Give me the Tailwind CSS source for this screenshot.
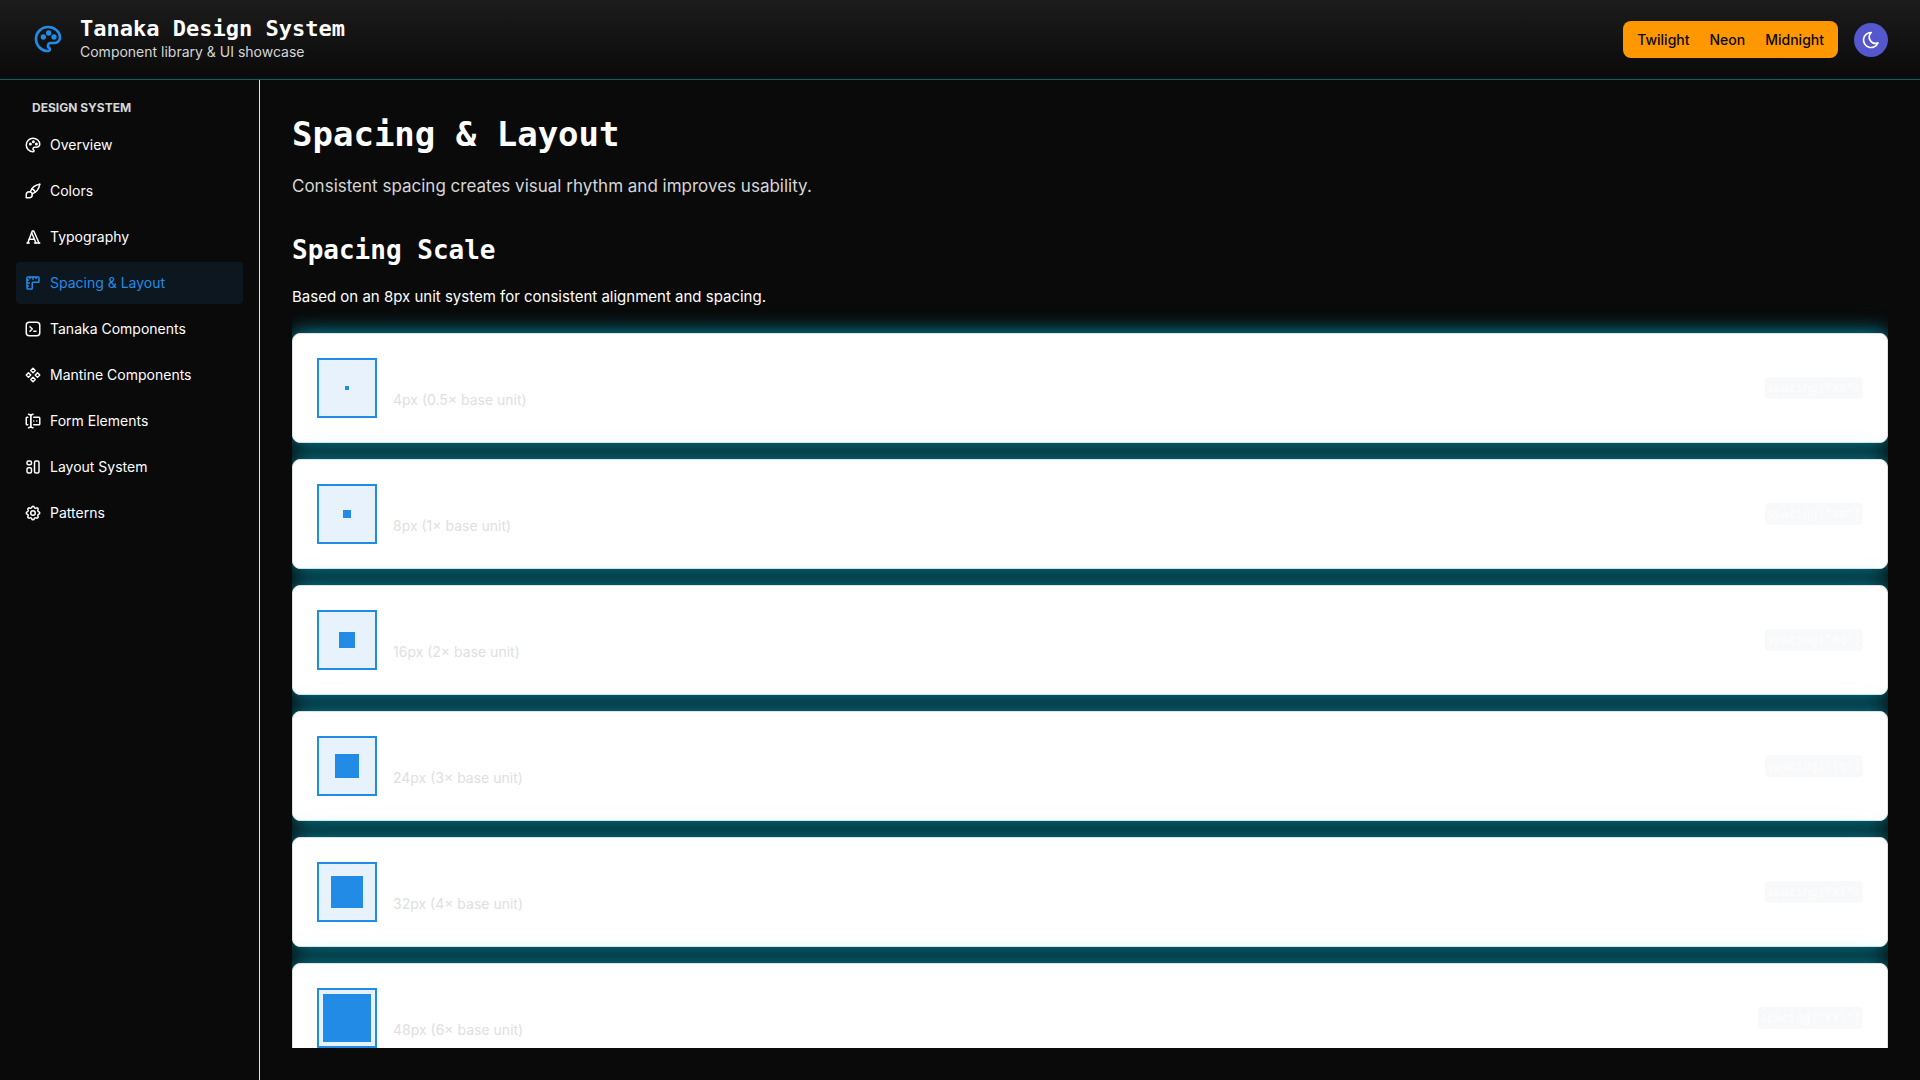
<!DOCTYPE html>
<html lang="en">
<head>
<meta charset="utf-8">
<meta name="viewport" content="width=device-width, initial-scale=1">
<title>Tanaka Design System</title>
<script src="https://cdn.jsdelivr.net/npm/@tailwindcss/browser@4"></script>
</head>
<body class="flex h-screen flex-col overflow-hidden bg-[#0a0a0a] font-[Inter,sans-serif] text-sm text-[#fefefe]">
<svg class="hidden" xmlns="http://www.w3.org/2000/svg">
  <symbol id="palette" viewBox="0 0 24 24"><path d="M12 21a9 9 0 0 1 0 -18c4.97 0 9 3.582 9 8c0 1.06 -.474 2.078 -1.318 2.828c-.844 .75 -1.989 1.172 -3.182 1.172h-2.5a2 2 0 0 0 -1 3.75a1.3 1.3 0 0 1 -1 2.25"/><path d="M7.500 10.500a1 1 0 1 0 2 0a1 1 0 1 0 -2 0"/><path d="M11.500 7.500a1 1 0 1 0 2 0a1 1 0 1 0 -2 0"/><path d="M15.500 10.500a1 1 0 1 0 2 0a1 1 0 1 0 -2 0"/></symbol>
</svg>

<header class="flex h-20 shrink-0 items-center justify-between border-b border-[#0a6468] bg-linear-to-b from-[#1c1c1c] to-[#0a0a0a] px-8">
  <div class="flex items-center gap-4 pb-0.5">
    <svg class="size-8 fill-none stroke-[#228be6] stroke-2" viewBox="0 0 24 24" stroke-linecap="round" stroke-linejoin="round"><use href="#palette"/></svg>
    <div>
      <p class="font-['DejaVu_Sans_Mono',monospace] text-[22px] leading-[27px] font-bold text-white">Tanaka Design System</p>
      <p class="text-sm leading-5 text-[#d6d6d6]">Component library &amp; UI showcase</p>
    </div>
  </div>
  <div class="flex items-center gap-4">
    <div class="flex h-[37px] items-center gap-5 rounded-lg bg-[#ff9800] px-3.5 font-medium text-[#0a0a0a]">
      <button type="button">Twilight</button>
      <button type="button">Neon</button>
      <button type="button">Midnight</button>
    </div>
    <button type="button" aria-label="Toggle theme" class="flex size-[34px] items-center justify-center rounded-full bg-[#5457cd]">
      <svg class="size-5 fill-none stroke-white stroke-2" viewBox="0 0 24 24" stroke-linecap="round" stroke-linejoin="round"><path d="M12 3c.132 0 .263 0 .393 0a7.500 7.500 0 0 0 7.920 12.446a9 9 0 1 1 -8.313 -12.454z"/></svg>
    </button>
  </div>
</header>

<div class="flex min-h-0 flex-1">
  <nav aria-label="Design system" class="w-[260px] shrink-0 border-r border-[#dee2e6] px-4 py-3">
    <h2 class="mb-2 px-4 pt-2 text-xs leading-4 font-bold text-[#d6d6d6]">DESIGN SYSTEM</h2>
    <ul id="nav" class="flex flex-col gap-1"></ul>
  </nav>
  <main class="min-w-0 flex-1 p-8">
    <div class="h-full overflow-hidden">
      <h1 class="font-['DejaVu_Sans_Mono',monospace] text-[34px] leading-11 font-bold text-white">Spacing &amp; Layout</h1>
      <p class="mt-4 text-[17px] leading-7 text-[#d6d6d6]">Consistent spacing creates visual rhythm and improves usability.</p>
      <h2 class="mt-8 font-['DejaVu_Sans_Mono',monospace] text-[26px] leading-9 font-bold text-white">Spacing Scale</h2>
      <p class="mt-4 text-[15px] leading-[25px]">Based on an 8px unit system for consistent alignment and spacing.</p>
      <ul id="scale" class="mt-6 flex flex-col gap-4"></ul>
    </div>
  </main>
</div>

<script>
const icons = {
  palette: '<use href="#palette"/>',
  brush: '<path d="M3 21v-4a4 4 0 1 1 4 4h-4"/><path d="M21 3a16 16 0 0 0 -12.800 10.200"/><path d="M21 3a16 16 0 0 1 -10.200 12.800"/><path d="M10.600 9a9 9 0 0 1 4.400 4.400"/>',
  type: '<path d="M4 20h3"/><path d="M14 20h7"/><path d="M6.900 15h6.900"/><path d="M10.200 6.300l5.800 13.700"/><path d="M5 20l6 -16h2l7 16"/>',
  ruler: '<path d="M5 4h14a1 1 0 0 1 1 1v5a1 1 0 0 1 -1 1h-7a1 1 0 0 0 -1 1v7a1 1 0 0 1 -1 1h-5a1 1 0 0 1 -1 -1v-14a1 1 0 0 1 1 -1"/><path d="M4 8h2"/><path d="M4 12h3"/><path d="M4 16h2"/><path d="M8 4v2"/><path d="M12 4v3"/><path d="M16 4v2"/>',
  terminal: '<path d="M8 9l3 3l-3 3"/><path d="M13 15h3"/><path d="M3 7a4 4 0 0 1 4 -4h10a4 4 0 0 1 4 4v10a4 4 0 0 1 -4 4h-10a4 4 0 0 1 -4 -4z"/>',
  components: '<path d="M3 12l3 3l3 -3l-3 -3z"/><path d="M15 12l3 3l3 -3l-3 -3z"/><path d="M9 6l3 3l3 -3l-3 -3z"/><path d="M9 18l3 3l3 -3l-3 -3z"/>',
  forms: '<path d="M12 3a3 3 0 0 0 -3 3v12a3 3 0 0 0 3 3"/><path d="M6 3a3 3 0 0 1 3 3v12a3 3 0 0 1 -3 3"/><path d="M13 7h7a1 1 0 0 1 1 1v8a1 1 0 0 1 -1 1h-7"/><path d="M5 7h-1a1 1 0 0 0 -1 1v8a1 1 0 0 0 1 1h1"/><path d="M17 12h.01"/><path d="M13 12h.01"/>',
  layout: '<path d="M4 6a2 2 0 0 1 2 -2h2a2 2 0 0 1 2 2v1a2 2 0 0 1 -2 2h-2a2 2 0 0 1 -2 -2z"/><path d="M4 15a2 2 0 0 1 2 -2h2a2 2 0 0 1 2 2v3a2 2 0 0 1 -2 2h-2a2 2 0 0 1 -2 -2z"/><path d="M14 6a2 2 0 0 1 2 -2h2a2 2 0 0 1 2 2v12a2 2 0 0 1 -2 2h-2a2 2 0 0 1 -2 -2z"/>',
  settings: '<path d="M10.325 4.317c.426 -1.756 2.924 -1.756 3.350 0a1.724 1.724 0 0 0 2.573 1.066c1.543 -.940 3.310 .826 2.370 2.370a1.724 1.724 0 0 0 1.065 2.572c1.756 .426 1.756 2.924 0 3.350a1.724 1.724 0 0 0 -1.066 2.573c.940 1.543 -.826 3.310 -2.370 2.370a1.724 1.724 0 0 0 -2.572 1.065c-.426 1.756 -2.924 1.756 -3.350 0a1.724 1.724 0 0 0 -2.573 -1.066c-1.543 .940 -3.310 -.826 -2.370 -2.370a1.724 1.724 0 0 0 -1.065 -2.572c-1.756 -.426 -1.756 -2.924 0 -3.350a1.724 1.724 0 0 0 1.066 -2.573c-.940 -1.543 .826 -3.310 2.370 -2.370c1 .608 2.296 .070 2.572 -1.065z"/><path d="M9 12a3 3 0 1 0 6 0a3 3 0 0 0 -6 0"/>'
};
const items = [['palette','Overview'],['brush','Colors'],['type','Typography'],['ruler','Spacing & Layout'],['terminal','Tanaka Components'],['components','Mantine Components'],['forms','Form Elements'],['layout','Layout System'],['settings','Patterns']];
document.getElementById('nav').innerHTML = items.map(([icon, label], i) => `
  <li><a href="#${icon}" class="flex items-center gap-2 rounded px-2 py-2.5 leading-[22px] ${i === 3 ? 'bg-[#0d171f] text-[#228be6]' : ''}">
    <svg class="size-[18px] fill-none stroke-current stroke-2" viewBox="0 0 24 24" stroke-linecap="round" stroke-linejoin="round" aria-hidden="true">${icons[icon]}</svg>${label.replace('&', '&amp;')}</a></li>`).join('');

const scale = [['xs',4,'0.5'],['sm',8,'1'],['md',16,'2'],['lg',24,'3'],['xl',32,'4'],['xxl',48,'6']];
document.getElementById('scale').innerHTML = scale.map(([name, px, units]) => `
  <li class="flex items-center justify-between rounded-lg border border-[#dee2e6] bg-white p-6 shadow-[0_0_20px_rgba(0,188,220,0.8),0_0_40px_rgba(0,188,220,0.06)]">
    <div class="flex items-center gap-4">
      <div class="flex size-[60px] items-center justify-center border-2 border-[#228be6] bg-[#e7f2fc]"><div class="bg-[#228be6]" style="width:${px}px;height:${px}px"></div></div>
      <p class="pt-6 leading-[22px] text-[#e0e0e0]">${px}px (${units}× base unit)</p>
    </div>
    <code class="rounded bg-[#f8f9fa] px-0.5 font-['DejaVu_Sans_Mono',monospace] text-xs leading-[22px] text-[#fefefe]">spacing("${name}")</code>
  </li>`).join('');
</script>
</body>
</html>
